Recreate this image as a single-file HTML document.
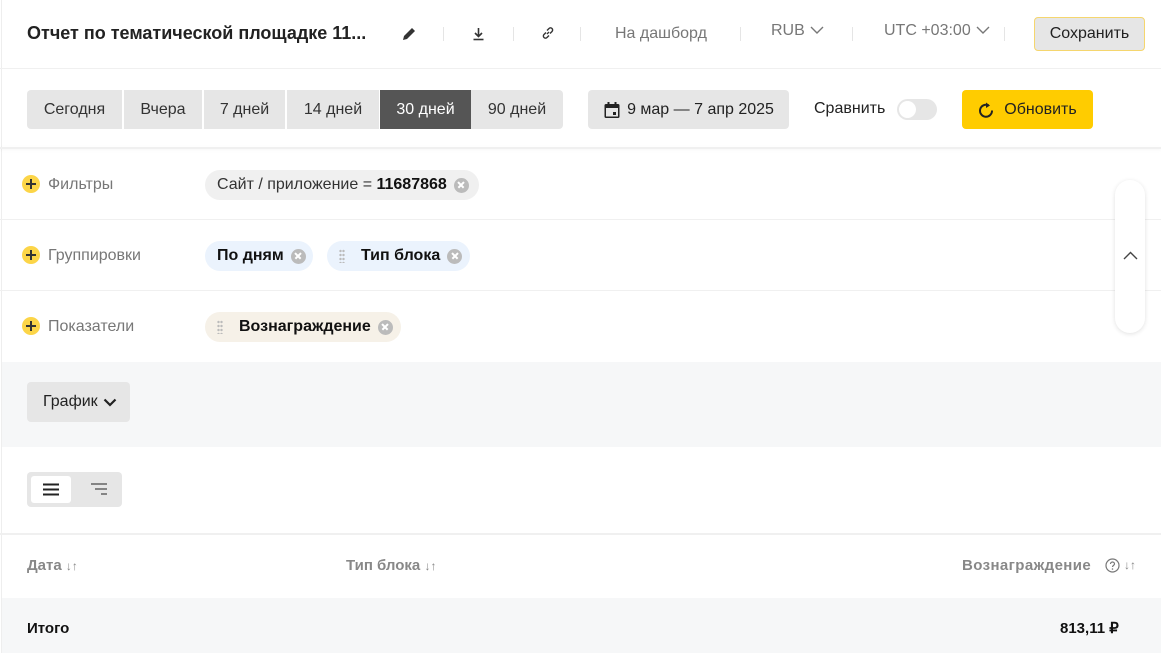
<!DOCTYPE html>
<html><head><meta charset="utf-8"><style>
*{box-sizing:border-box;margin:0;padding:0}
body{width:1161px;height:653px;overflow:hidden;background:#fff;font-family:"Liberation Sans","Noto Sans CJK JP",sans-serif;color:#222;position:relative}
.a{position:absolute}
.t{position:absolute;white-space:nowrap;line-height:1}
.sep{position:absolute;width:1px;height:14px;background:#e5e5e5;top:27px}
.seg{position:absolute;top:90px;height:39px;background:#e6e6e6;font-size:16px;color:#333;display:flex;align-items:center;justify-content:center}
.plus{position:absolute;left:22px;width:18px;height:18px;border-radius:50%;background:#fcd548}
.plus:before{content:"";position:absolute;left:4px;top:8.3px;width:10px;height:1.4px;background:#333}
.plus:after{content:"";position:absolute;left:8.3px;top:4px;width:1.4px;height:10px;background:#333}
.lbl{position:absolute;left:48px;font-size:16px;color:#777}
.chip{position:absolute;height:30px;border-radius:15px;display:flex;align-items:center;font-size:16px;padding:0 10px 0 12px}
.x{display:inline-block;width:15px;height:15px;border-radius:50%;background:#bbb;position:relative;margin-left:7px}
.x:before,.x:after{content:"";position:absolute;left:3.5px;top:6.8px;width:8px;height:1.5px;background:#fff;transform:rotate(45deg)}
.x:after{transform:rotate(-45deg)}
.dots{display:inline-block;width:6px;height:14px;margin-right:16px;background:radial-gradient(circle,#bbb 1px,transparent 1.4px) 0 0/3px 4px}
.hl{position:absolute;left:0;right:0;height:1px;background:#f0f0f0}
</style></head><body>
<div class="a" style="left:1px;top:0;width:1px;height:653px;background:#eee"></div>
<div class="t" style="left:27px;top:24px;font-size:18px;font-weight:bold;color:#222">Отчет по тематической площадке 11...</div>
<svg class="a" style="left:401px;top:25px" width="17" height="17" viewBox="0 0 17 17"><path d="M2 15l1-4 8-8 3 3-8 8z" fill="#333"/></svg>
<div class="sep" style="left:443px"></div>
<svg class="a" style="left:472px;top:26px" width="13" height="15" viewBox="0 0 13 15"><path d="M6.5 2v8M3 7l3.5 3.5L10 7" stroke="#333" stroke-width="1.6" fill="none"/><path d="M1.5 13.5h10" stroke="#333" stroke-width="1.6"/></svg>
<div class="sep" style="left:513px"></div>
<svg class="a" style="left:541px;top:26px" width="14" height="14" viewBox="0 0 14 14"><path d="M6 8l2-2M5 6.5L3 8.5a2 2 0 003 3l2-2M9 7.5l2-2a2 2 0 00-3-3l-2 2" stroke="#333" stroke-width="1.4" fill="none"/></svg>
<div class="sep" style="left:580px"></div>
<div class="t" style="left:615px;top:26px;font-size:16px;color:#777">На дашборд</div>
<div class="sep" style="left:740px"></div>
<div class="t" style="left:771px;top:23px;font-size:16px;color:#777">RUB</div>
<svg class="a" style="left:810px;top:26px" width="14" height="9"><path d="M1 1l6 6 6-6" stroke="#777" stroke-width="1.4" fill="none"/></svg>
<div class="sep" style="left:852px"></div>
<div class="t" style="left:884px;top:23px;font-size:16px;color:#777">UTC +03:00</div>
<svg class="a" style="left:976px;top:26px" width="14" height="9"><path d="M1 1l6 6 6-6" stroke="#777" stroke-width="1.4" fill="none"/></svg>
<div class="sep" style="left:1004px"></div>
<div class="a" style="left:1034px;top:17px;width:111px;height:34px;background:#e6e6e6;border:1px solid #f5d66e;border-radius:4px;font-size:16px;color:#222;display:flex;align-items:center;justify-content:center">Сохранить</div>
<div class="hl" style="top:68px"></div>

<div class="seg" style="left:27px;width:95px;border-radius:4px 0 0 4px">Сегодня</div>
<div class="seg" style="left:124px;width:78px">Вчера</div>
<div class="seg" style="left:204px;width:81px">7 дней</div>
<div class="seg" style="left:287px;width:92px">14 дней</div>
<div class="seg" style="left:380px;width:91px;background:#555;color:#fff">30 дней</div>
<div class="seg" style="left:471px;width:92px;border-radius:0 4px 4px 0">90 дней</div>
<div class="seg" style="left:588px;width:201px;border-radius:4px;color:#222"><svg width="18" height="18" viewBox="0 0 18 18" style="margin-right:6px"><rect x="1.5" y="3" width="15" height="14" rx="1.5" fill="#222"/><rect x="3" y="7" width="12" height="8.5" fill="#e6e6e6"/><rect x="4.5" y="1" width="2" height="4" fill="#222"/><rect x="11.5" y="1" width="2" height="4" fill="#222"/><rect x="10" y="11" width="3" height="3" fill="#222"/></svg>9 мар — 7 апр 2025</div>
<div class="t" style="left:814px;top:101px;font-size:16px;color:#222">Сравнить</div>
<div class="a" style="left:897px;top:99px;width:40px;height:21px;border-radius:11px;background:#e6e6e6"><div class="a" style="left:2px;top:2px;width:17px;height:17px;border-radius:50%;background:#fff"></div></div>
<div class="a" style="left:962px;top:90px;width:131px;height:39px;background:#fc0;border-radius:4px;font-size:16px;color:#222;display:flex;align-items:center;justify-content:center"><svg width="16" height="16" viewBox="0 0 16 16" style="margin-right:10px"><path d="M10.5 3.3A6 6 0 1 0 14 8.5" stroke="#222" stroke-width="2" fill="none"/><path d="M8 0.5l4 3-4 2.5z" fill="#222"/></svg>Обновить</div>
<div class="a" style="left:0;right:0;top:147px;height:2px;background:#f0f0f0;box-shadow:0 1px 3px rgba(0,0,0,.05)"></div>

<div class="plus" style="top:175px"></div><div class="lbl" style="top:176px">Фильтры</div>
<div class="chip" style="left:205px;top:170px;background:#f0f0f0;color:#333">Сайт / приложение =&nbsp;<b style="color:#111">11687868</b><span class="x"></span></div>
<div class="hl" style="top:219px"></div>
<div class="plus" style="top:246px"></div><div class="lbl" style="top:247px">Группировки</div>
<div class="chip" style="left:205px;top:241px;background:#ebf3fd;font-weight:bold;color:#111;padding-right:7px">По дням<span class="x"></span></div>
<div class="chip" style="left:327px;top:241px;background:#ebf3fd;font-weight:bold;color:#111;padding-right:8px"><span class="dots" style="margin-right:16px"></span>Тип блока<span class="x"></span></div>
<div class="hl" style="top:290px"></div>
<div class="plus" style="top:317px"></div><div class="lbl" style="top:318px">Показатели</div>
<div class="chip" style="left:205px;top:312px;background:#f6f1e8;font-weight:bold;color:#111;padding-right:8px"><span class="dots"></span>Вознаграждение<span class="x"></span></div>

<div class="a" style="left:1115px;top:180px;width:30px;height:153px;border-radius:15px;background:#fff;box-shadow:0 1px 5px rgba(0,0,0,.12)"></div>
<svg class="a" style="left:1123px;top:251px" width="15" height="9"><path d="M1 8l6.5-6.5L14 8" stroke="#444" stroke-width="1.4" fill="none"/></svg>

<div class="a" style="left:2px;right:0;top:362px;height:85px;background:#f6f7f8"></div>
<div class="a" style="left:27px;top:382px;width:103px;height:40px;background:#e6e6e6;border-radius:4px;font-size:16px;color:#222;display:flex;align-items:center;padding-left:16px">График<svg width="14" height="9" style="margin-left:5px"><path d="M1.5 1.5l5.5 5.5 5.5-5.5" stroke="#222" stroke-width="2.2" fill="none"/></svg></div>

<div class="a" style="left:27px;top:472px;width:95px;height:35px;background:#e6e6e6;border-radius:4px"></div>
<div class="a" style="left:31px;top:476px;width:40px;height:27px;background:#fff;border-radius:3px"></div>
<svg class="a" style="left:43px;top:483px" width="16" height="13"><path d="M0 1.5h16M0 6.5h16M0 11.5h16" stroke="#222" stroke-width="2"/></svg>
<svg class="a" style="left:91px;top:483px" width="16" height="13"><path d="M0 1h16M4 6h12M10 11h6" stroke="#777" stroke-width="1.8"/></svg>
<div class="hl" style="top:533px;height:2px"></div>

<div class="t" style="left:27px;top:558px;font-size:15px;font-weight:bold;color:#888">Дата <span style="font-weight:normal;font-size:12px">↓↑</span></div>
<div class="t" style="left:346px;top:558px;font-size:15px;font-weight:bold;color:#888">Тип блока <span style="font-weight:normal;font-size:12px">↓↑</span></div>
<div class="t" style="left:962px;top:558px;font-size:15px;font-weight:bold;color:#888;letter-spacing:0.4px">Вознаграждение</div>
<svg class="a" style="left:1105px;top:558px" width="15" height="15"><circle cx="7.5" cy="7.5" r="6.5" stroke="#777" stroke-width="1.2" fill="none"/><path d="M5.5 6a2 2 0 114 0c0 1.3-2 1.5-2 3" stroke="#777" stroke-width="1.2" fill="none"/><circle cx="7.5" cy="11" r=".8" fill="#777"/></svg>
<div class="t" style="left:1124px;top:559px;font-size:12px;color:#888">↓↑</div>

<div class="a" style="left:2px;right:0;top:598px;height:55px;background:#f6f7f8"></div>
<div class="t" style="left:27px;top:621px;font-size:15px;font-weight:bold;color:#111">Итого</div>
<div class="t" style="left:1060px;top:621px;font-size:15px;font-weight:bold;color:#111">813,11 ₽</div>
</body></html>
